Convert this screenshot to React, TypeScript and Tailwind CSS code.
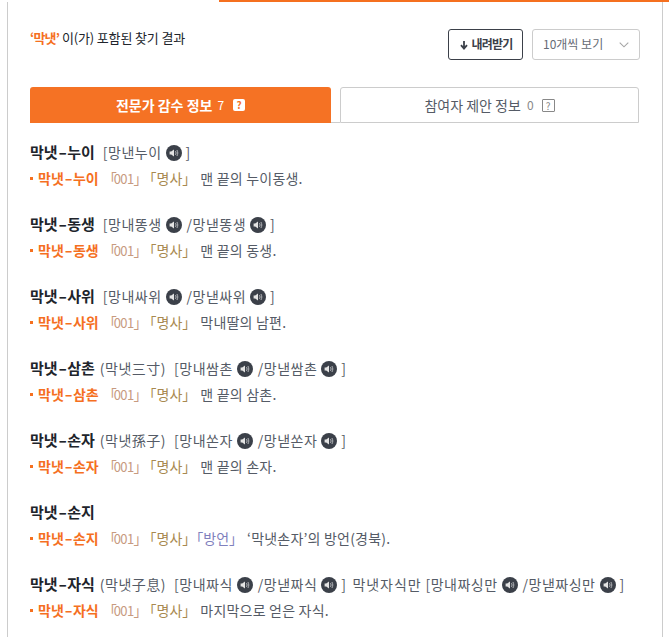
import React from "react";

const font = { fontFamily: '"Noto Sans CJK KR", "Noto Sans", sans-serif' };

function Speaker() {
  return (
    <svg viewBox="0 0 16 16" className="inline-block w-[16px] h-[16px] ml-[4px] mr-[4px] align-[-3px]">
      <circle cx="8" cy="8" r="8" fill="#3b4049" />
      <path d="M3.6 6.4h1.6L8 4.4v7.2L5.2 9.6H3.6z" fill="#e4e4e4" />
      <path d="M9.5 6c.7 1.2.7 2.8 0 4M10.9 5c1.2 1.8 1.2 4.2 0 6" stroke="#b4b6ba" strokeWidth="1" fill="none" />
    </svg>
  );
}

function Word({ text }: { text: string }) {
  const [a, b] = text.split("-");
  return (
    <>
      {a}
      <span className="inline-block scale-x-[1.6] mx-[2px]">-</span>
      {b}
    </>
  );
}

function Pron({ items, prefix, first }: { items: string[]; prefix?: string; first?: boolean }) {
  return (
    <span className={"text-[#555b66] text-[14px] tracking-[0.5px] " + (first ? "ml-[8px]" : "ml-[6px]")}>
      {prefix ? <span className="mr-[4px] tracking-[0.9px]">{prefix}</span> : null}
      [
      {items.map((t, i) => (
        <React.Fragment key={t}>
          {i > 0 ? <span className="ml-[1px]">/</span> : ""}
          {t}
          <Speaker />
        </React.Fragment>
      ))}
      ]
    </span>
  );
}

function Tag({ t }: { t: string }) {
  const color = t === "방언" ? "text-[#7f80bd]" : t === "명사" ? "text-[#a8894f]" : "text-[#c79a80]";
  if (t === "001") {
    return (
      <span className={color}>
        <span className="tracking-[-3px]">「</span>
        <span className="text-[13px] tracking-[-0.6px]">{t}</span>
        <span className="tracking-[-5px]">」</span>
      </span>
    );
  }
  return (
    <span className={color}>
      「{t}
      <span className="tracking-[-7px]">」</span>
    </span>
  );
}

function Entry({
  word,
  hanja,
  prons,
  extra,
  tags,
  def,
}: {
  word: string;
  hanja?: string;
  prons?: string[];
  extra?: { word: string; prons: string[] };
  tags: string[];
  def: string;
}) {
  return (
    <div className="h-[72px] whitespace-nowrap">
      <div className="h-[26px] flex items-center">
        <span className="text-[15px] font-bold text-[#20242b]">
          <Word text={word} />
        </span>
        {hanja ? <span className="text-[14px] tracking-[0.5px] text-[#555b66] ml-[5px] mr-[2px]">({hanja})</span> : null}
        {prons ? <Pron items={prons} first={!hanja} /> : null}
        {extra ? <Pron items={extra.prons} prefix={extra.word} /> : null}
      </div>
      <div className="h-[26px] flex items-center text-[14px]">
        <span className="w-[3px] h-[3px] bg-[#f5701f] mr-[5px]" />
        <span className="font-bold text-[#f5701f] mr-[4px]">
          <Word text={word} />
        </span>
        {tags.map((t) => (
          <Tag key={t} t={t} />
        ))}
        <span className="text-[#555b66] tracking-[0.2px] ml-[11px]">{def}</span>
      </div>
    </div>
  );
}

const entries = [
  { word: "막냇-누이", prons: ["망낸누이"], tags: ["001", "명사"], def: "맨 끝의 누이동생." },
  { word: "막냇-동생", prons: ["망내똥생", "망낻똥생"], tags: ["001", "명사"], def: "맨 끝의 동생." },
  { word: "막냇-사위", prons: ["망내싸위", "망낻싸위"], tags: ["001", "명사"], def: "막내딸의 남편." },
  { word: "막냇-삼촌", hanja: "막냇三寸", prons: ["망내쌈촌", "망낻쌈촌"], tags: ["001", "명사"], def: "맨 끝의 삼촌." },
  { word: "막냇-손자", hanja: "막냇孫子", prons: ["망내쏜자", "망낻쏜자"], tags: ["001", "명사"], def: "맨 끝의 손자." },
  { word: "막냇-손지", tags: ["001", "명사", "방언"], def: "‘막냇손자’의 방언(경북)." },
  {
    word: "막냇-자식",
    hanja: "막냇子息",
    prons: ["망내짜식", "망낻짜식"],
    extra: { word: "막냇자식만", prons: ["망내짜싱만", "망낻짜싱만"] },
    tags: ["001", "명사"],
    def: "마지막으로 얻은 자식.",
  },
];

export default function App() {
  return (
    <div style={font} className="w-[669px] h-[637px] overflow-hidden bg-white">
      <div className="flex justify-end">
        <div className="w-[450px] h-[2px] bg-[#f5701f]" />
      </div>
      <div className="ml-[7px] w-[656px] h-[635px] border-x border-[#cccccc] pl-[22px] pr-[22px] pt-[26px]">
        <div className="flex justify-between items-start h-[59px]">
          <div className="text-[13px] text-[#20242b] tracking-[-0.15px] leading-[20px]">
            <span className="text-[#f5701f] font-bold tracking-[-0.8px]">‘막냇’</span> 이(가) 포함된 찾기 결과
          </div>
          <div className="flex gap-[9px] mt-[1px]">
            <div className="w-[75px] h-[31px] border border-[#3b4049] rounded-[3px] flex items-center justify-center text-[12px] tracking-[-0.8px] font-bold text-[#3b4049] pb-[2px]">
              <svg viewBox="0 0 10 10" className="w-[10px] h-[10px] mr-[3px] mt-[2px]">
                <path d="M5 1v7M2 5.2 5 8.6l3-3.4" stroke="#3b4049" strokeWidth="1.8" fill="none" />
              </svg>
              내려받기
            </div>
            <div className="w-[108px] h-[31px] border border-[#cccccc] rounded-[3px] flex items-center justify-between pl-[10px] pr-[10px] text-[12px] text-[#666b75] pb-[2px]">
              10개씩 보기
              <svg viewBox="0 0 10 6" className="w-[10px] h-[6px] mt-[2px]">
                <path d="M.7.7 5 4.8 9.3.7" stroke="#a5a5a5" strokeWidth="1.1" fill="none" />
              </svg>
            </div>
          </div>
        </div>
        <div className="flex h-[36px] w-[610px]">
          <div className="w-[301px] bg-[#f57224] rounded-t-[3px] flex items-center justify-center text-white text-[14px] font-bold">
            전문가 감수 정보
            <span className="font-normal text-[12px] ml-[5px]">7</span>
            <span className="ml-[9px] w-[12px] h-[12px] bg-white rounded-[2px] text-[#f57224] text-[10px] font-bold leading-[12px] text-center">?</span>
          </div>
          <div className="w-[9px] border-b border-[#cccccc]" />
          <div className="w-[299px] border border-[#cccccc] rounded-t-[3px] flex items-center justify-center text-[#555b66] text-[14px]">
            참여자 제안 정보
            <span className="text-[12px] text-[#888] ml-[6px]">0</span>
            <span className="ml-[8px] w-[13px] h-[13px] border border-[#888] rounded-[1px] text-[#888] text-[10px] leading-[11px] text-center">?</span>
          </div>
        </div>
        <div className="mt-[16px]">
          {entries.map((e) => (
            <Entry key={e.word} {...e} />
          ))}
        </div>
      </div>
    </div>
  );
}
